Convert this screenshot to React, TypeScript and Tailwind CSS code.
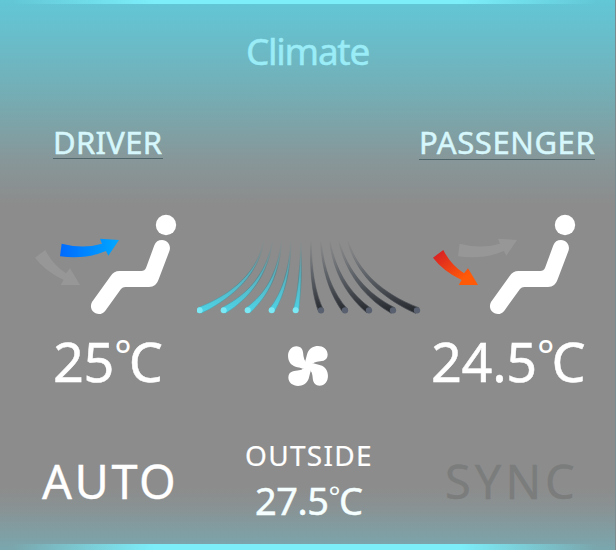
import React from 'react';

const AIR_FINS = [
  'M250 32 C235 120 163 191 54 233 L63 250 C166 200 237 128 252 32Z',
  'M277 32 C258 130 208 190 126 233 L136 250 C215 200 262 135 279 32Z',
  'M304 32 C292 130 258 190 197 235 L210 248 C266 196 297 135 306 32Z',
  'M332 32 C327 120 308 185 268 237 L283 245 C316 190 331 125 334 32Z',
  'M362 32 C360 120 354 190 340 239 L356 241 C363 185 366 120 364 32Z',
];
const OFF_FINS = [
  'M266 32 C236 123 163 192 54 233 L63 250 C170 202 242 130 268 32Z',
  'M293 32 C266 125 208 192 126 233 L136 250 C218 202 272 130 295 32Z',
  'M320 32 C303 122 261 190 197 235 L210 248 C270 196 309 130 322 32Z',
  'M347 32 C338 120 312 188 268 237 L283 245 C321 190 344 125 349 32Z',
  'M376 32 C376 120 364 190 340 239 L356 241 C374 190 381 125 378 32Z',
];
const TIPS = [59, 131, 203, 275, 347];

function Seat({ passenger = false }: { passenger?: boolean }) {
  const id = passenger ? 'warm' : 'cool';
  const dx = passenger ? -6 : 0;
  return (
    <svg className="block h-[130px] w-[170px]" viewBox="0 0 510 390">
      <defs>
        <linearGradient id="cool" x1="0" x2="1">
          <stop stopColor="#006aff" />
          <stop offset="1" stopColor="#00a8ff" />
        </linearGradient>
        <linearGradient id="warm" x1="0" y1="0" x2="1" y2="1">
          <stop offset="0.1" stopColor="#d92323" />
          <stop offset="0.75" stopColor="#ff5a08" />
        </linearGradient>
      </defs>
      <g transform={`translate(${dx} 0)`}>
        <path
          fill={passenger ? '#979797' : `url(#${id})`}
          d="M125 131 Q190 148 246 131 L240 116 L297 120 L265 167 L258 153 Q198 179 120 169Z"
        />
        <path
          fill={passenger ? `url(#${id})` : '#979797'}
          d="M76 150 Q98 194 138 220 L150 205 L180 255 L122 255 L131 240 Q76 214 45 173Z"
        />
      </g>
      <g transform={`translate(${passenger ? -3 : 0} 0)`} fill="white">
        <circle cx="438" cy="75" r="30.5" />
        <path
          d="M426 120 C443 120 453 136 449 151 L416 238 C411 253 402 261 387 261 L316 261 Q308 261 303 267 L256 332 C247 344 232 345 222 337 C211 328 211 316 216 306 L272 228 Q282 213 298 213 L364 213 Q374 213 378 204 L403 136 Q409 120 426 120Z"
        />
      </g>
    </svg>
  );
}

function Vents() {
  return (
    <svg className="block h-[100px] w-[224px]" viewBox="51 0 672 300">
      <defs>
        <linearGradient id="air" gradientUnits="userSpaceOnUse" x1="0" y1="30" x2="0" y2="245">
          <stop stopColor="#55bfce" stopOpacity="0" />
          <stop offset="0.15" stopColor="#55aab6" stopOpacity="0.15" />
          <stop offset="0.45" stopColor="#4fb6c5" stopOpacity="0.8" />
          <stop offset="1" stopColor="#4dd4e7" />
        </linearGradient>
        <linearGradient id="airEdge" gradientUnits="userSpaceOnUse" x1="0" y1="30" x2="0" y2="245">
          <stop stopColor="#41757d" stopOpacity="0" />
          <stop offset="0.15" stopColor="#41757d" stopOpacity="0.1" />
          <stop offset="0.5" stopColor="#41757d" stopOpacity="0.6" />
          <stop offset="1" stopColor="#4aabb8" stopOpacity="0.7" />
        </linearGradient>
        <linearGradient id="off" gradientUnits="userSpaceOnUse" x1="0" y1="30" x2="0" y2="245">
          <stop stopColor="#6c7177" stopOpacity="0" />
          <stop offset="0.15" stopColor="#6c7177" stopOpacity="0.25" />
          <stop offset="0.45" stopColor="#5b6168" stopOpacity="0.85" />
          <stop offset="1" stopColor="#25282d" />
        </linearGradient>
        <linearGradient id="offEdge" gradientUnits="userSpaceOnUse" x1="0" y1="30" x2="0" y2="245">
          <stop stopColor="#4d5156" stopOpacity="0" />
          <stop offset="1" stopColor="#4a4e55" stopOpacity="0.8" />
        </linearGradient>
      </defs>
      {AIR_FINS.map((d, i) => (
        <g key={d}>
          <path d={d} fill="url(#air)" stroke="url(#airEdge)" strokeWidth="2.5" />
          <circle cx={TIPS[i]} cy="241" r="9" fill="#7be9f5" />
        </g>
      ))}
      <g transform="translate(770 0) scale(-1 1)">
        {OFF_FINS.map((d, i) => (
          <g key={d}>
            <path d={d} fill="url(#off)" stroke="url(#offEdge)" strokeWidth="3" />
            <circle cx={TIPS[i]} cy="241" r="9.5" fill="#596170" />
          </g>
        ))}
      </g>
    </svg>
  );
}

function Fan() {
  return (
    <svg className="block h-[42px] w-[42px]" viewBox="-63 -63 126 126" fill="white">
      {[0, 90, 180, 270].map((angle) => (
        <path
          key={angle}
          transform={`rotate(${angle})`}
          d="M3 3 L-16 8 C-30 3 -46 4 -55 -11 C-66 -31 -58 -59 -34 -59 C-13 -58 -15 -38 -13 -27 Q-11 -17 -8 -16Z"
        />
      ))}
    </svg>
  );
}

function Degrees({ value, ring }: { value: string; ring: string }) {
  return (
    <>
      <span>{value}</span>
      <span className={ring}>°</span>
      <span>C</span>
    </>
  );
}

export default function App() {
  return (
    <main className="flex h-[550px] w-[616px] flex-col overflow-hidden border-r border-[#7b8c90] bg-[linear-gradient(to_bottom,#62c7d6_0px,#6bbac6_50px,#77aab0_105px,#879799_160px,#8c8c8c_205px,#8c8c8c_488px,#8a9192_505px,#7aa6ad_548px)] font-['Noto_Sans','Open_Sans',sans-serif] whitespace-nowrap text-white [-webkit-text-stroke:0.5px_currentColor]">
      <div className="h-1 shrink-0 bg-[linear-gradient(to_right,transparent_2%,#7beefa_25%,#7beefa_75%,transparent_97%)]" />
      <h1 className="flex h-[96px] shrink-0 justify-center pt-[22px] text-[37px] leading-[50px] font-normal tracking-[-1.3px] text-[#9aecf7]">
        Climate
      </h1>
      <div className="flex h-[100px] shrink-0 text-[31px] leading-[42px] text-[#d6f7fb]">
        <div className="w-[419px] pt-[21px] pl-[53px]">
          <div className="h-[38px] w-[110px] border-b border-[#50666b] tracking-[0.3px]">DRIVER</div>
        </div>
        <div className="pt-[21px]">
          <div className="h-[39px] w-[176px] border-b border-[#50666b] tracking-[0.6px]">PASSENGER</div>
        </div>
      </div>
      <div className="flex h-[130px] shrink-0">
        <div className="w-[197px] pl-5"><Seat /></div>
        <div className="w-[223px] pt-[30px]"><Vents /></div>
        <Seat passenger />
      </div>
      <div className="flex h-[100px] shrink-0 text-[54px] leading-[63px]">
        <div className="flex w-[287px] pl-[53px] tracking-[-0.3px]">
          <Degrees value="25" ring="text-[41px] leading-[51px] tracking-[-3px] [-webkit-text-stroke:0px]" />
        </div>
        <div className="w-[144px] pt-[15px]"><Fan /></div>
        <div className="flex tracking-[-0.3px]">
          <Degrees value="24.5" ring="text-[41px] leading-[51px] tracking-[-3px] [-webkit-text-stroke:0px]" />
        </div>
      </div>
      <div className="flex h-[114px] shrink-0">
        <div className="w-[245px] pt-[18px] pl-[42px] text-[47px] leading-[66px] tracking-[2.5px] [-webkit-text-stroke:0.3px_currentColor]">AUTO</div>
        <div className="w-[200px]">
          <div className="h-[44px] pt-[4px] text-[28px] leading-[42px] tracking-[1.3px] [-webkit-text-stroke:0.2px_currentColor]">OUTSIDE</div>
          <div className="flex pl-[10px] text-[38px] leading-[52px] tracking-[-0.5px] text-[#f5ffff]">
            <Degrees value="27.5" ring="text-[28px] leading-[42px] tracking-[-1.5px] [-webkit-text-stroke:0px]" />
          </div>
        </div>
        <div className="pt-[18px] text-[47px] leading-[66px] tracking-[4px] text-[#7b7c7c] [-webkit-text-stroke:0.3px_currentColor]">SYNC</div>
      </div>
      <div className="h-1.5 shrink-0 bg-[linear-gradient(to_right,transparent_2%,#7beefa_25%,#7beefa_75%,transparent_97%)]" />
    </main>
  );
}
